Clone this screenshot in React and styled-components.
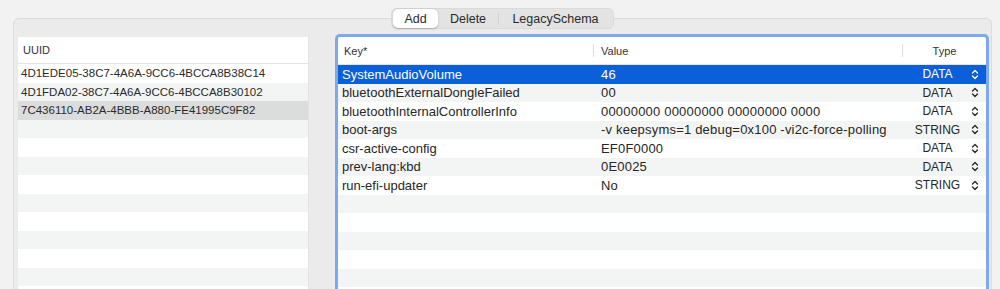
import styled, { createGlobalStyle } from "styled-components";

const GlobalStyle = createGlobalStyle`
  html, body {
    margin: 0;
    background: #f2f2f2;
  }
  body {
    font-family: "Liberation Sans", Arial, sans-serif;
    color: #262626;
  }
`;

const uuids = [
  "4D1EDE05-38C7-4A6A-9CC6-4BCCA8B38C14",
  "4D1FDA02-38C7-4A6A-9CC6-4BCCA8B30102",
  "7C436110-AB2A-4BBB-A880-FE41995C9F82",
];

const entries = [
  { key: "SystemAudioVolume", value: "46", type: "DATA" },
  { key: "bluetoothExternalDongleFailed", value: "00", type: "DATA" },
  { key: "bluetoothInternalControllerInfo", value: "00000000 00000000 00000000 0000", type: "DATA" },
  { key: "boot-args", value: "-v keepsyms=1 debug=0x100 -vi2c-force-polling", type: "STRING" },
  { key: "csr-active-config", value: "EF0F0000", type: "DATA" },
  { key: "prev-lang:kbd", value: "0E0025", type: "DATA" },
  { key: "run-efi-updater", value: "No", type: "STRING" },
];

const TOTAL_ROWS = 13;

const Chevrons = () => (
  <svg width="8" height="11" viewBox="0 0 8 11" fill="none">
    <path d="M1.5 4 L4 1.5 L6.5 4" stroke="currentColor" strokeWidth="1.3" strokeLinecap="round" strokeLinejoin="round" />
    <path d="M1.5 7 L4 9.5 L6.5 7" stroke="currentColor" strokeWidth="1.3" strokeLinecap="round" strokeLinejoin="round" />
  </svg>
);

const App = () => {
  const leftRows = Array.from({ length: TOTAL_ROWS }, (_, i) => uuids[i] || "");
  const rightRows = Array.from({ length: TOTAL_ROWS }, (_, i) => entries[i] || null);

  return (
    <Page>
      <GlobalStyle />
      <TabBar>
        <Segmented>
          <Segment $active $width={45}>Add</Segment>
          <Segment $width={60}>Delete</Segment>
          <Divider />
          <Segment $width={113}>LegacySchema</Segment>
        </Segmented>
      </TabBar>
      <TabBox>
        <LeftTable>
          <LeftHeader>UUID</LeftHeader>
          {leftRows.map((u, i) => (
            <LeftRow key={i} $odd={i % 2 === 1} $selected={i === 2}>
              {u}
            </LeftRow>
          ))}
        </LeftTable>
        <RightTable>
          <HeaderRow>
            <HeadCell $divider>Key*</HeadCell>
            <HeadCell $divider $pad={7}>Value</HeadCell>
            <HeadCell $center>Type</HeadCell>
          </HeaderRow>
          {rightRows.map((e, i) => (
            <Row key={i} $odd={i % 2 === 1} $selected={i === 0}>
              {e && (
                <>
                  <KeyCell>{e.key}</KeyCell>
                  <ValueCell>{e.value}</ValueCell>
                  <TypeCell>
                    <span>{e.type}</span>
                    <Chevrons />
                  </TypeCell>
                </>
              )}
            </Row>
          ))}
        </RightTable>
      </TabBox>
    </Page>
  );
};

export default App;

const Page = styled.div`
  height: 289px;
  overflow: hidden;
  padding-top: 8px;
  box-sizing: border-box;
`;

const TabBar = styled.div`
  display: flex;
  justify-content: center;
  padding: 0 8px 0 13px;
  margin-bottom: -11px;
  position: relative;
  z-index: 1;
`;

const Segmented = styled.div`
  display: flex;
  align-items: center;
  height: 21px;
  box-sizing: border-box;
  padding: 1px;
  background: #e3e3e3;
  border: 1px solid #dadada;
  border-radius: 6px;
`;

const Segment = styled.div`
  width: ${(p) => p.$width}px;
  height: 19px;
  display: flex;
  align-items: center;
  justify-content: center;
  font-size: 12.5px;
  color: #2a2a2a;
  border-radius: 5px;
  background: ${(p) => (p.$active ? "#ffffff" : "transparent")};
  box-shadow: ${(p) => (p.$active ? "0 0.5px 1.5px rgba(0,0,0,0.25)" : "none")};
`;

const Divider = styled.div`
  width: 1px;
  height: 12px;
  background: #cfcfcf;
`;

const TabBox = styled.div`
  margin: 0 8px 0 13px;
  height: 300px;
  box-sizing: border-box;
  border: 1px solid #dcdcdc;
  border-radius: 6px 6px 0 0;
  background: #ebebeb;
  padding: 18px 5px 0 4px;
  display: flex;
  gap: 29px;
`;

const LeftTable = styled.div`
  width: 290px;
  flex-shrink: 0;
  display: flex;
  flex-direction: column;
  background: #ffffff;
  border-right: 1px solid #e2e2e2;
`;

const LeftHeader = styled.div`
  height: 27px;
  box-sizing: border-box;
  border-bottom: 1px solid #e4e4e4;
  display: flex;
  align-items: center;
  padding-left: 5px;
  font-size: 11px;
  color: #333;
`;

const LeftRow = styled.div`
  height: 18.5px;
  flex-shrink: 0;
  display: flex;
  align-items: center;
  padding-left: 3px;
  font-size: 11.5px;
  color: #2a2a2a;
  white-space: nowrap;
  background: ${(p) => (p.$selected ? "#dcdcdc" : p.$odd ? "#f3f4f4" : "#ffffff")};
`;

const RightTable = styled.div`
  flex: 1;
  display: flex;
  flex-direction: column;
  background: #ffffff;
  border-radius: 2px 2px 0 0;
  box-shadow: 0 0 0 3px #7ca8ec;
`;

const HeaderRow = styled.div`
  height: 28px;
  flex-shrink: 0;
  box-sizing: border-box;
  border-bottom: 1px solid #e4e4e4;
  display: grid;
  grid-template-columns: 256px 309px 1fr;
`;

const HeadCell = styled.div`
  position: relative;
  display: flex;
  align-items: center;
  justify-content: ${(p) => (p.$center ? "center" : "flex-start")};
  padding-left: ${(p) => (p.$center ? 0 : p.$pad || 6)}px;
  font-size: 11px;
  color: #333;
  border-right: ${(p) => (p.$divider ? "none" : "none")};

  &::after {
    content: "";
    display: ${(p) => (p.$divider ? "block" : "none")};
    position: absolute;
    right: 0;
    top: 7px;
    bottom: 7px;
    width: 1px;
    background: #dddddd;
  }
`;

const Row = styled.div`
  height: 18.5px;
  flex-shrink: 0;
  display: grid;
  grid-template-columns: 256px 309px 1fr;
  align-items: center;
  font-size: 13px;
  white-space: nowrap;
  color: ${(p) => (p.$selected ? "#ffffff" : "#262626")};
  background: ${(p) => (p.$selected ? "#0b5fd8" : p.$odd ? "#f3f4f4" : "#ffffff")};
`;

const KeyCell = styled.div`
  padding-left: 4px;
  overflow: hidden;
`;

const ValueCell = styled.div`
  padding-left: 7px;
  overflow: hidden;
  letter-spacing: 0.2px;
`;

const TypeCell = styled.div`
  display: grid;
  grid-template-columns: 1fr 12px;
  align-items: center;
  padding-right: 5px;
  font-size: 12px;

  span {
    text-align: center;
    padding-left: 3px;
  }

  svg {
    display: block;
    margin: 0 auto;
  }
`;
